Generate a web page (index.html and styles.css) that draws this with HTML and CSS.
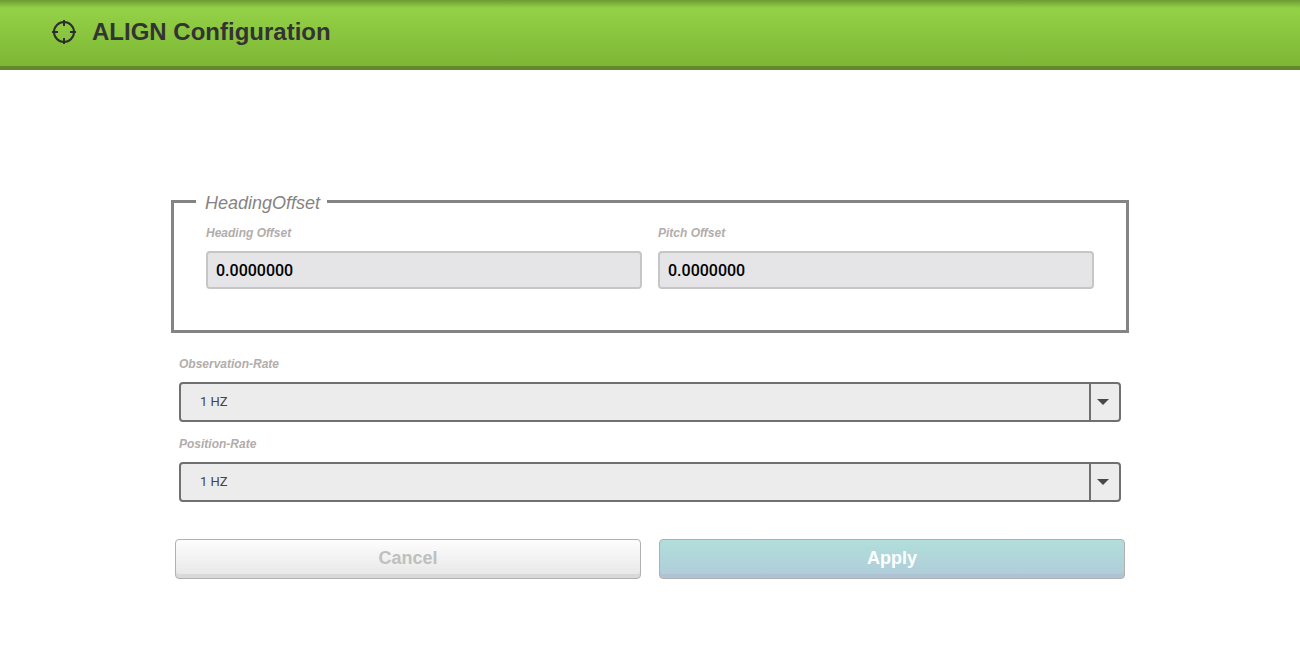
FILE: index.html
```html
<!DOCTYPE html>
<html lang="en">
<head>
    <meta charset="UTF-8">
    <meta name="viewport" content="width=device-width, initial-scale=1.0">
    <title>ALIGN Configuration</title>
    <link rel="stylesheet" href="styles.css">
</head>
<body>
    <header class="header">
        <svg class="header-icon" viewBox="0 0 24 24" aria-hidden="true">
            <circle cx="12" cy="12" r="10"/>
            <path d="M12 0v6M12 18v6M0 12h6M18 12h6"/>
        </svg>
        <h1>ALIGN Configuration</h1>
    </header>

    <main class="container">
        <form>
            <!-- Offsets -->
            <fieldset class="offsets">
                <legend>HeadingOffset</legend>
                <div class="offset-row">
                    <div class="field">
                        <label for="headingOffset">Heading Offset</label>
                        <input type="text" id="headingOffset" value="0.0000000">
                    </div>
                    <div class="field">
                        <label for="pitchOffset">Pitch Offset</label>
                        <input type="text" id="pitchOffset" value="0.0000000">
                    </div>
                </div>
            </fieldset>

            <!-- Rates -->
            <div class="rates">
                <div class="field">
                    <label for="observationRate">Observation-Rate</label>
                    <select id="observationRate">
                        <option>1 HZ</option>
                    </select>
                </div>
                <div class="field">
                    <label for="positionRate">Position-Rate</label>
                    <select id="positionRate">
                        <option>1 HZ</option>
                    </select>
                </div>
            </div>

            <div class="actions">
                <button type="button" class="cancel">Cancel</button>
                <button type="submit" class="apply">Apply</button>
            </div>
        </form>
    </main>
</body>
</html>
```
FILE: styles.css
```css
* {
    box-sizing: border-box;
}
body {
    font-family: "Liberation Sans", Arial, sans-serif;
    margin: 0;
    background: #fff;
}
.header {
    display: flex;
    align-items: center;
    gap: 16px;
    height: 70px;
    padding: 0 52px 2px;
    background: linear-gradient(#6c9a35, #92d046 8px, #92d046 12px, #7db634);
    border-bottom: 4px solid #5f8a27;
}
.header-icon {
    width: 24px;
    height: 24px;
    fill: none;
    stroke: #2d2d2d;
    stroke-width: 2;
}
h1 {
    margin: 0;
    font-size: 24px;
    line-height: 28px;
    color: #333;
}
.container {
    max-width: 990px;
    margin: 0 auto;
    padding: 119px 16px 0;
}
.offsets {
    min-width: 0;
    margin: 0;
    padding: 13px 32px 41px;
    border: 3px solid #868383;
}
legend {
    margin-left: -10px;
    padding: 4px 7px 0 9px;
    font-size: 18px;
    font-style: italic;
    line-height: 20px;
    color: #868383;
}
.offset-row {
    display: flex;
    gap: 16px;
}
.field {
    flex: 1;
    min-width: 0;
}
label {
    display: block;
    margin-bottom: 11px;
    font-size: 12px;
    font-weight: bold;
    font-style: italic;
    line-height: 14px;
    color: #b2adab;
}
input {
    display: block;
    width: 100%;
    height: 38px;
    padding: 0 8px;
    border: 2px solid #c6c6c6;
    border-radius: 4px;
    background: #e5e5e7;
    font-family: Roboto, sans-serif;
    font-size: 16px;
    font-weight: 500;
    color: #000;
}
.rates {
    display: flex;
    flex-direction: column;
    gap: 15px;
    padding: 24px 8px 0;
}
select {
    display: block;
    width: 100%;
    height: 40px;
    padding: 0 50px 2px 19px;
    border: 2px solid #707070;
    border-radius: 4px;
    appearance: none;
    /* arrow and the line left of it */
    background:
        url("data:image/svg+xml,%3Csvg xmlns='http://www.w3.org/2000/svg' width='12' height='6'%3E%3Cpath d='M0 0h12L6 6z' fill='%23484848'/%3E%3C/svg%3E") no-repeat right 10px center,
        linear-gradient(#707070, #707070) no-repeat right 28px top / 2px 100%,
        #ececec;
    font-family: Roboto, sans-serif;
    font-size: 13px;
    color: #444;
}
.actions {
    display: flex;
    gap: 18px;
    padding: 37px 4px 0;
}
button {
    flex: 1;
    height: 40px;
    padding: 0 16px 2px;
    border: 1px solid #b0b0b0;
    border-radius: 4px;
    font-family: inherit;
    font-size: 18px;
    font-weight: bold;
    cursor: pointer;
}
.cancel {
    background: linear-gradient(#fdfdfd, #e6e6e6);
    box-shadow: inset 0 -4px 0 #d9d9d9;
    color: #bfbfbf;
}
.apply {
    background: linear-gradient(#b1dfda, #b0cbdb);
    box-shadow: inset 0 -4px 0 #b0c3d3;
    color: #fff;
}
```
